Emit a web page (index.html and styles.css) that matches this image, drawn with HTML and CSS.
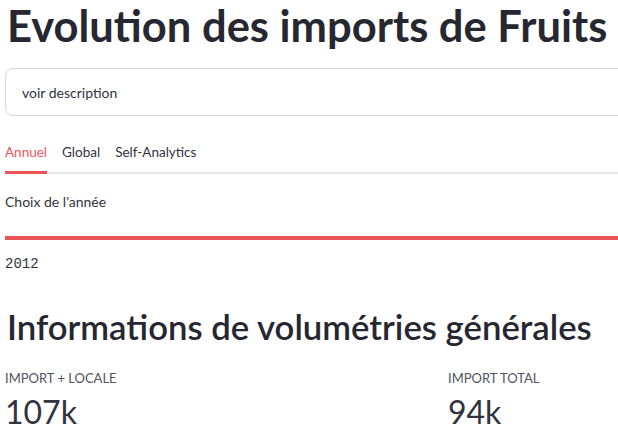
FILE: index.html
```html
<!DOCTYPE html>
<html lang="fr">
<head>
<meta charset="utf-8">
<link rel="stylesheet" href="styles.css">
</head>
<body>
<main class="app">
  <h1 class="title">Evolution des imports de Fruits</h1>
  <div class="expander">voir description</div>
  <nav class="tabs">
    <span class="tab active">Annuel</span>
    <span class="tab">Global</span>
    <span class="tab">Self-Analytics</span>
  </nav>
  <section class="panel">
    <div class="slider-label">Choix de l'année</div>
    <div class="slider-track"></div>
    <div class="slider-min">2012</div>
    <h2 class="subtitle">Informations de volumétries générales</h2>
    <div class="metrics">
      <div class="metric">
        <div class="metric-label">IMPORT + LOCALE</div>
        <div class="metric-value">107k</div>
      </div>
      <div class="metric">
        <div class="metric-label">IMPORT TOTAL</div>
        <div class="metric-value">94k</div>
      </div>
    </div>
  </section>
</main>
</body>
</html>
```
FILE: styles.css
```css
html, body {
  margin: 0;
  padding: 0;
  background: #ffffff;
  overflow: hidden;
}
body {
  font-family: "Lato", "Open Sans", sans-serif;
  color: #31333f;
}
.app {
  width: 870px;
  padding: 0 0 0 5px;
}
.title {
  margin: 0;
  padding: 0 0 0 2px;
  font-size: 43.5px;
  line-height: 50px;
  font-weight: 700;
  color: #262730;
}
.expander {
  margin-top: 18px;
  height: 48px;
  border: 1px solid #d6d6d9;
  border-radius: 8px;
  box-sizing: border-box;
  padding: 0 0 0 16px;
  display: flex;
  align-items: center;
  font-size: 14px;
  color: #31333f;
}
.tabs {
  margin-top: 23px;
  display: flex;
  gap: 15px;
  border-bottom: 2px solid #e8e8ea;
  font-size: 13.5px;
}
.tab {
  padding: 5px 0 11px;
  margin-bottom: -2px;
  border-bottom: 3px solid transparent;
}
.tab.active {
  color: #ec5357;
  border-bottom-color: #ec5357;
}
.slider-label {
  margin-top: 18px;
  font-size: 14px;
  line-height: 20px;
}
.slider-track {
  margin-top: 24px;
  height: 4px;
  background: #ec5357;
}
.slider-min {
  margin-top: 16px;
  font-family: "Liberation Mono", "DejaVu Sans Mono", monospace;
  font-size: 14px;
  line-height: 16px;
  color: #31333f;
}
.subtitle {
  margin: 33px 0 0;
  padding-left: 2px;
  font-size: 34.7px;
  line-height: 44px;
  font-weight: 600;
  color: #262730;
}
.metrics {
  margin-top: 21px;
  display: grid;
  grid-template-columns: 1fr 1fr;
  gap: 16px;
}
.metric-label {
  font-size: 13px;
  line-height: 16px;
  color: #505360;
}
.metric-value {
  margin-top: 6px;
  font-size: 32px;
  line-height: 40px;
  font-weight: 400;
}
```
